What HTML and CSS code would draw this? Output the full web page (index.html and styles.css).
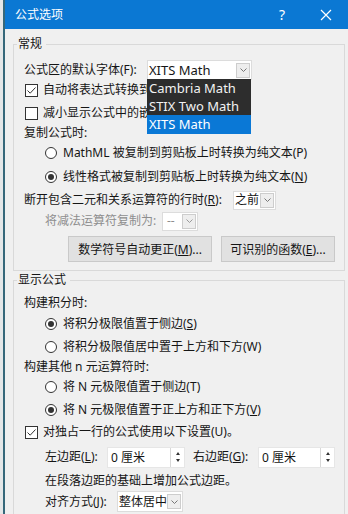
FILE: index.html
```html
<!DOCTYPE html>
<html lang="zh-CN">
<head>
<meta charset="utf-8">
<title>公式选项</title>
<link rel="stylesheet" href="styles.css">
</head>
<body>
<div class="window">
  <header class="titlebar">
    <span class="title">公式选项</span>
    <span class="tb-btn help">?</span>
    <span class="tb-btn close"><svg width="12" height="12" viewBox="0 0 12 12"><path d="M1 1L11 11M11 1L1 11" stroke="#fff" stroke-width="1.2" fill="none"/></svg></span>
  </header>
  <div class="content">
    <fieldset class="group g1">
      <legend>常规</legend>
      <div class="row">
        <span class="lbl w-font">公式区的默认字体(F):</span>
        <div class="combo c-font">
          <span class="combo-text latin">XITS Math</span>
          <span class="arrow"><svg width="7" height="4" viewBox="0 0 7 4"><path d="M0.5 0.5L3.5 3.5L6.5 0.5" stroke="#777" fill="none"/></svg></span>
          <ul class="dropdown">
            <li>Cambria Math</li>
            <li>STIX Two Math</li>
            <li class="sel">XITS Math</li>
          </ul>
        </div>
      </div>
      <div class="row">
        <span class="cb"><svg width="11" height="11" viewBox="0 0 11 11"><path d="M1.5 5.5L4.2 8.2L9.5 2.5" stroke="#333" fill="none"/></svg></span>
        <span class="clip c1">自动将表达式转换到</span>
      </div>
      <div class="row mt3">
        <span class="cb"></span>
        <span class="clip c2">减小显示公式中的嵌</span>
      </div>
      <div class="row">
        <span>复制公式时:</span>
      </div>
      <div class="row sub">
        <span class="radio"></span>
        <span>MathML 被复制到剪贴板上时转换为纯文本(P)</span>
      </div>
      <div class="row sub mt4">
        <span class="radio on"></span>
        <span>线性格式被复制到剪贴板上时转换为纯文本(<u>N</u>)</span>
      </div>
      <div class="row mt3">
        <span class="lbl w-break">断开包含二元和关系运算符的行时(<u>R</u>):</span>
        <div class="combo c-before">
          <span class="combo-text">之前</span>
          <span class="arrow"><svg width="7" height="4" viewBox="0 0 7 4"><path d="M0.5 0.5L3.5 3.5L6.5 0.5" stroke="#777" fill="none"/></svg></span>
        </div>
      </div>
      <div class="row sub mt1">
        <span class="lbl w-minus disabled">将减法运算符复制为:</span>
        <div class="combo c-minus">
          <span class="combo-text disabled">--</span>
          <span class="arrow"><svg width="7" height="4" viewBox="0 0 7 4"><path d="M0.5 0.5L3.5 3.5L6.5 0.5" stroke="#999" fill="none"/></svg></span>
        </div>
      </div>
      <div class="btn-row">
        <button class="btn b-auto">数学符号自动更正(<u>M</u>)...</button>
        <button class="btn b-func">可识别的函数(<u>E</u>)...</button>
      </div>
    </fieldset>

    <fieldset class="group g2">
      <legend>显示公式</legend>
      <div class="row">
        <span>构建积分时:</span>
      </div>
      <div class="row sub mt1">
        <span class="radio on"></span>
        <span>将积分极限值置于侧边(<u>S</u>)</span>
      </div>
      <div class="row sub mt3">
        <span class="radio"></span>
        <span>将积分极限值居中置于上方和下方(W)</span>
      </div>
      <div class="row">
        <span>构建其他 n 元运算符时:</span>
      </div>
      <div class="row sub">
        <span class="radio"></span>
        <span>将 N 元极限值置于侧边(T)</span>
      </div>
      <div class="row sub mt3">
        <span class="radio on"></span>
        <span>将 N 元极限值置于正上方和正下方(<u>V</u>)</span>
      </div>
      <div class="row mt2">
        <span class="cb"><svg width="11" height="11" viewBox="0 0 11 11"><path d="M1.5 5.5L4.2 8.2L9.5 2.5" stroke="#333" fill="none"/></svg></span>
        <span>对独占一行的公式使用以下设置(U)。</span>
      </div>
      <div class="row sub spin-row">
        <span class="lbl w-left">左边距(<u>L</u>):</span>
        <div class="spin s-left">
          <span class="spin-text">0 厘米</span>
          <span class="spin-btns"><i class="up"></i><i class="down"></i></span>
        </div>
        <span class="lbl w-right">右边距(<u>G</u>):</span>
        <div class="spin s-right">
          <span class="spin-text">0 厘米</span>
          <span class="spin-btns"><i class="up"></i><i class="down"></i></span>
        </div>
      </div>
      <div class="row sub mt3">
        <span>在段落边距的基础上增加公式边距。</span>
      </div>
      <div class="row sub align-row">
        <span class="lbl w-align">对齐方式(J):</span>
        <div class="combo c-align">
          <span class="combo-text">整体居中</span>
          <span class="arrow"><svg width="7" height="4" viewBox="0 0 7 4"><path d="M0.5 0.5L3.5 3.5L6.5 0.5" stroke="#777" fill="none"/></svg></span>
        </div>
      </div>
    </fieldset>
  </div>
</div>
</body>
</html>
```

FILE: styles.css
```css
* { box-sizing: border-box; }
html, body { margin: 0; padding: 0; }
body {
  width: 348px;
  height: 514px;
  overflow: hidden;
  background: #e4e7e8;
  font-family: "Noto Sans", "Noto Sans CJK SC", sans-serif;
  font-size: 12px;
  color: #151515;
}
u { text-decoration: underline; text-underline-offset: 1px; }

.window {
  margin-left: 3px;
  border-left: 2px solid #36687a;
  height: 514px;
  background: #f0f0f0;
}

.titlebar {
  height: 29px;
  background: #0b78d3;
  color: #fff;
  display: flex;
  align-items: center;
  padding-left: 10px;
}
.title { flex: 1; font-size: 12px; line-height: 16px; }
.tb-btn {
  width: 44px;
  height: 29px;
  display: flex;
  align-items: center;
  justify-content: center;
}
.help { font-size: 14px; }

.content { display: flex; flex-direction: column; }

.group {
  margin: 0 3px 0 8px;
  padding: 8px 0 8px 10px;
  border: 1px solid #d9d9d9;
  min-width: 0;
}
.g1 { margin-top: 7px; }
.g2 { margin-top: 1px; padding-top: 5px; }
.group legend {
  margin-left: -7px;
  padding: 0 4px 0 1px;
  font-size: 12px;
  line-height: 16px;
}

.row {
  display: flex;
  align-items: center;
  height: 20px;
  line-height: 16px;
  white-space: nowrap;
}
.sub { padding-left: 21px; }
.mt1 { margin-top: 1px; }
.mt2 { margin-top: 2px; }
.mt3 { margin-top: 3px; }
.mt4 { margin-top: 4px; }

.clip { overflow: hidden; }
.c1 { width: 104px; }
.c2 { width: 104px; }

.lbl { flex: none; }
.w-font { width: 123px; }
.w-break { width: 209px; }
.w-minus { width: 117px; }
.w-left { width: 62px; }
.w-right { width: 65px; margin-left: 8px; }
.w-align { width: 72px; }
.disabled { color: #8e8e8e; }

.cb {
  width: 13px;
  height: 13px;
  border: 1px solid #333;
  background: #fff;
  margin: 0 5px 0 1px;
  flex: none;
  display: flex;
  align-items: center;
  justify-content: center;
}
.radio {
  width: 12px;
  height: 12px;
  border: 1px solid #333;
  border-radius: 50%;
  background: #fff;
  margin-right: 6px;
  flex: none;
  display: flex;
  align-items: center;
  justify-content: center;
}
.radio.on::after {
  content: "";
  width: 6px;
  height: 6px;
  border-radius: 50%;
  background: #333;
}

.combo {
  position: relative;
  display: flex;
  align-items: center;
  background: #fff;
  border: 1px solid #dcdcdc;
  height: 19px;
  flex: none;
}
.combo-text { flex: 1; padding-left: 1px; line-height: 16px; }
.latin { font-size: 13px; }
.arrow {
  width: 14px;
  height: 15px;
  margin-right: 1px;
  background: #eeeeee;
  border: 1px solid #cdcdcd;
  display: flex;
  align-items: center;
  justify-content: center;
  flex: none;
}
.c-font { width: 105px; height: 20px; }
.c-before { width: 43px; }
.c-minus { width: 36px; }
.c-minus .combo-text { padding-left: 4px; }
.c-align { width: 66px; height: 21px; }

.dropdown {
  position: absolute;
  left: -1px;
  top: 18px;
  width: 104px;
  margin: 0;
  padding: 0;
  list-style: none;
  z-index: 5;
}
.dropdown li {
  height: 18px;
  line-height: 18px;
  padding-left: 2px;
  background: #2d2d2d;
  color: #f2f2f2;
  font-size: 13px;
}
.dropdown li.sel { background: #0a78d6; color: #fff; height: 19px; }

.btn-row {
  display: flex;
  gap: 9px;
  padding-left: 44px;
  margin-top: 5px;
}
.btn {
  height: 26px;
  background: #e1e1e1;
  border: 1px solid #c9c9c9;
  font-family: inherit;
  font-size: 12px;
  color: #151515;
  padding: 0;
}
.b-auto { width: 144px; }
.b-func { width: 114px; }

.spin-row { height: 22px; margin-top: 4px; }
.align-row { height: 21px; }
.spin {
  display: flex;
  height: 21px;
  background: #fff;
  border: 1px solid #e6e6e6;
  flex: none;
}
.s-left { width: 78px; }
.s-right { width: 77px; }
.spin-text { flex: 1; padding-left: 3px; line-height: 19px; }
.spin-btns {
  width: 14px;
  border-left: 1px solid #d8d8d8;
  display: flex;
  flex-direction: column;
  align-items: center;
  justify-content: center;
  gap: 4px;
}
.spin-btns i {
  width: 0;
  height: 0;
  border-left: 2px solid transparent;
  border-right: 2px solid transparent;
}
.spin-btns .up { border-bottom: 3px solid #333; }
.spin-btns .down { border-top: 3px solid #333; }
```
